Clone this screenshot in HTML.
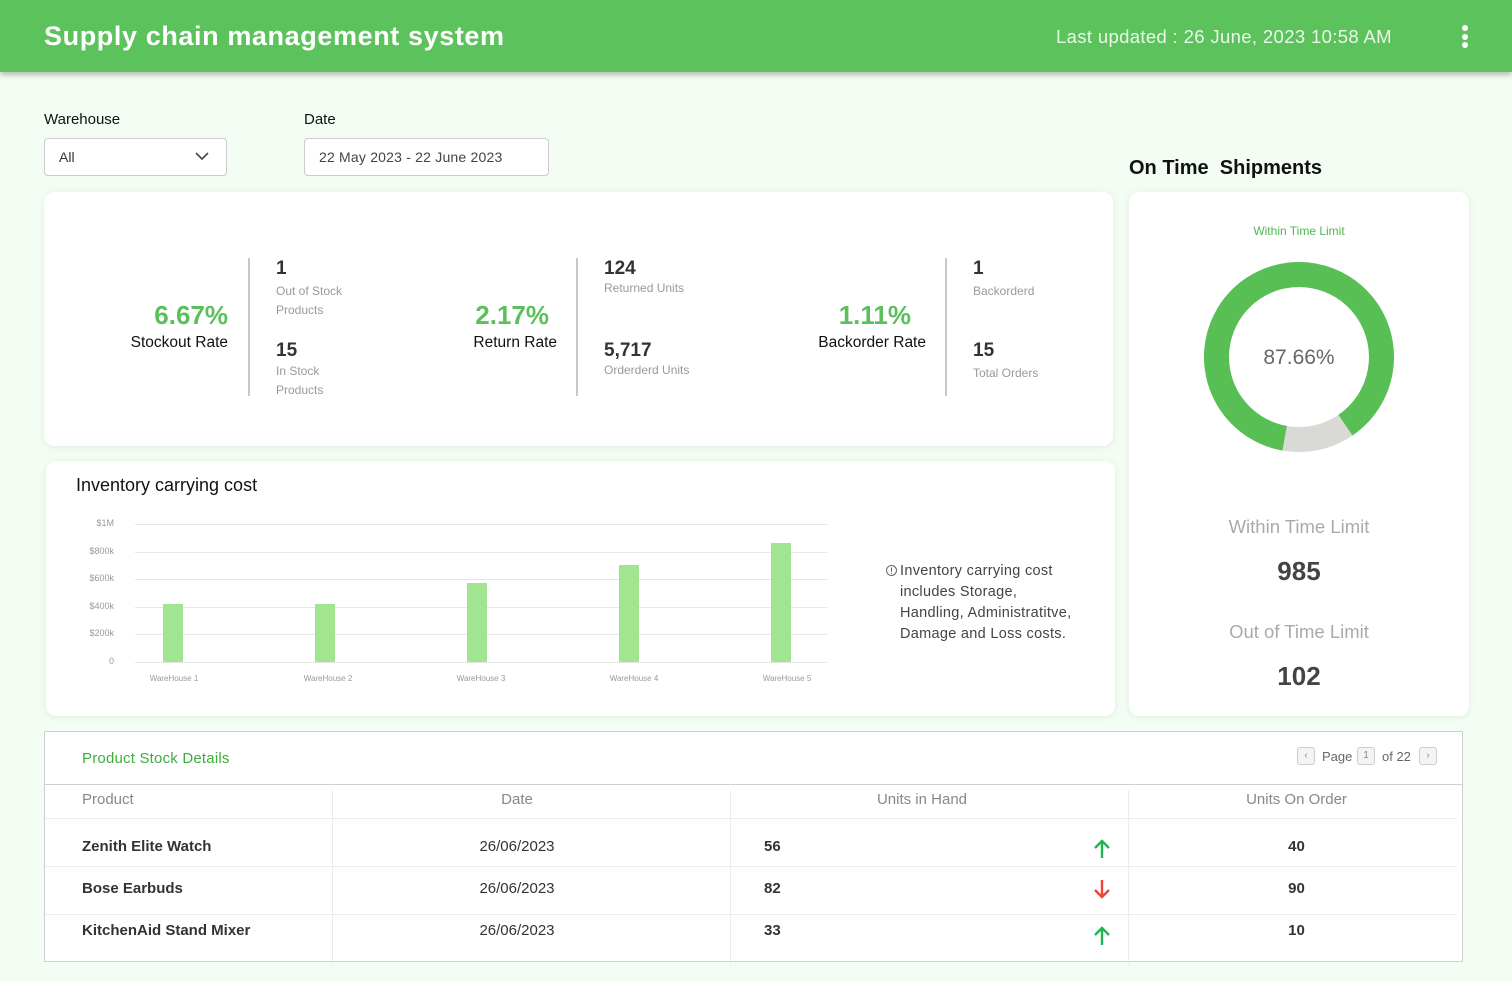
<!DOCTYPE html>
<html><head><meta charset="utf-8"><style>
*{box-sizing:border-box;margin:0;padding:0}
body{width:1512px;height:982px;overflow:hidden;background:#f3fdf3;font-family:"Liberation Sans",sans-serif;position:relative;color:#222}
.a{position:absolute;white-space:nowrap}
.hdr{position:absolute;left:0;top:0;width:1512px;height:72px;background:#5bc25c;box-shadow:0 3px 5px rgba(0,0,0,.25)}
.card{position:absolute;background:#fff;border-radius:10px;box-shadow:0 1px 6px rgba(120,170,120,.18)}
.big{font-weight:bold;font-size:19px;color:#333}
.sm{font-size:12px;color:#999;line-height:19px}
.pct{font-weight:bold;font-size:26px;color:#5bbf5b}
.lab{font-size:15.5px;color:#111}
.vl{position:absolute;width:2px;background:#c8c8c8;top:258px;height:138px}
.yl{position:absolute;font-size:9px;color:#999;text-align:right;width:40px}
.gl{position:absolute;left:135px;width:692px;height:1px;background:#e6e6e6}
.bar{position:absolute;width:20px;background:#a1e590}
.xl{position:absolute;font-size:8px;color:#999;width:80px;text-align:center}
.th{position:absolute;font-size:15px;color:#888}
.td{position:absolute;font-size:15px;color:#333;font-weight:bold}
.tdn{position:absolute;font-size:15px;color:#333}
.hl{position:absolute;height:1px;background:#ececec}
.vc{position:absolute;width:1px;background:#ececec;top:790px;height:176px}
.pb{position:absolute;width:18px;height:18px;border:1px solid #ccc;border-radius:3px;background:#f4f4f4;font-size:10px;color:#888;text-align:center;line-height:16px}
</style></head><body>
<div class="hdr"></div>
<div class="a" style="left:44px;top:21px;font-size:27px;font-weight:bold;color:#fff;letter-spacing:.6px">Supply chain management system</div>
<div class="a" style="left:1056px;top:26px;font-size:18.5px;color:#eaf8ea;letter-spacing:.35px">Last updated : 26 June, 2023 10:58 AM</div>
<div class="a" style="left:1462px;top:25px;width:6px;height:6px;border-radius:3px;background:#fff"></div>
<div class="a" style="left:1462px;top:34px;width:6px;height:6px;border-radius:3px;background:#fff"></div>
<div class="a" style="left:1462px;top:42px;width:6px;height:6px;border-radius:3px;background:#fff"></div>

<div class="a" style="left:44px;top:111px;font-size:15px;color:#111">Warehouse</div>
<div class="a" style="left:304px;top:111px;font-size:15px;color:#111">Date</div>
<div class="a" style="left:44px;top:138px;width:183px;height:38px;border:1px solid #ccc;border-radius:4px;background:#fff"></div>
<div class="a" style="left:59px;top:149px;font-size:14px;color:#333">All</div>
<svg class="a" style="left:194px;top:150px" width="16" height="12"><path d="M2 3l6 6 6-6" stroke="#444" stroke-width="1.6" fill="none"/></svg>
<div class="a" style="left:304px;top:138px;width:245px;height:38px;border:1px solid #ccc;border-radius:4px;background:#fff"></div>
<div class="a" style="left:319px;top:149px;font-size:14px;color:#444;letter-spacing:.2px">22 May 2023 - 22 June 2023</div>

<div class="card" style="left:44px;top:192px;width:1069px;height:254px"></div>
<div class="a pct" style="left:0;width:228px;text-align:right;top:300px">6.67%</div>
<div class="a lab" style="left:0;width:228px;text-align:right;top:334px">Stockout Rate</div>
<div class="vl" style="left:248px"></div>
<div class="a big" style="left:276px;top:258px">1</div>
<div class="a sm" style="left:276px;top:282px">Out of Stock<br>Products</div>
<div class="a big" style="left:276px;top:340px">15</div>
<div class="a sm" style="left:276px;top:362px">In Stock<br>Products</div>
<div class="a pct" style="left:300px;width:249px;text-align:right;top:300px">2.17%</div>
<div class="a lab" style="left:300px;width:257px;text-align:right;top:334px">Return Rate</div>
<div class="vl" style="left:576px"></div>
<div class="a big" style="left:604px;top:258px">124</div>
<div class="a sm" style="left:604px;top:279px">Returned Units</div>
<div class="a big" style="left:604px;top:340px">5,717</div>
<div class="a sm" style="left:604px;top:361px">Orderderd Units</div>
<div class="a pct" style="left:700px;width:211px;text-align:right;top:300px">1.11%</div>
<div class="a lab" style="left:700px;width:226px;text-align:right;top:334px">Backorder Rate</div>
<div class="vl" style="left:945px"></div>
<div class="a big" style="left:973px;top:258px">1</div>
<div class="a sm" style="left:973px;top:282px">Backorderd</div>
<div class="a big" style="left:973px;top:340px">15</div>
<div class="a sm" style="left:973px;top:364px">Total Orders</div>

<div class="card" style="left:46px;top:461px;width:1069px;height:255px"></div>
<div class="a" style="left:76px;top:475px;font-size:18px;color:#111">Inventory carrying cost</div>
<div class="yl" style="left:74px;top:518px">$1M</div>
<div class="yl" style="left:74px;top:546px">$800k</div>
<div class="yl" style="left:74px;top:573px">$600k</div>
<div class="yl" style="left:74px;top:601px">$400k</div>
<div class="yl" style="left:74px;top:628px">$200k</div>
<div class="yl" style="left:74px;top:656px">0</div>
<div class="gl" style="top:524px"></div><div class="gl" style="top:552px"></div><div class="gl" style="top:579px"></div><div class="gl" style="top:607px"></div><div class="gl" style="top:634px"></div><div class="gl" style="top:662px"></div>
<div class="bar" style="left:163px;top:604px;height:58px"></div>
<div class="bar" style="left:315px;top:604px;height:58px"></div>
<div class="bar" style="left:467px;top:583px;height:79px"></div>
<div class="bar" style="left:619px;top:565px;height:97px"></div>
<div class="bar" style="left:771px;top:543px;height:119px"></div>
<div class="xl" style="left:134px;top:674px">WareHouse 1</div>
<div class="xl" style="left:288px;top:674px">WareHouse 2</div>
<div class="xl" style="left:441px;top:674px">WareHouse 3</div>
<div class="xl" style="left:594px;top:674px">WareHouse 4</div>
<div class="xl" style="left:747px;top:674px">WareHouse 5</div>
<div class="a" style="left:886px;top:561px;font-size:14.5px;color:#444;line-height:21px"><span style="position:absolute;left:0;font-size:9px;border:1px solid #666;border-radius:50%;width:11px;height:11px;line-height:10px;text-align:center;top:4px">!</span><div style="padding-left:14px;letter-spacing:.3px">Inventory carrying cost<br>includes Storage,<br>Handling, Administratitve,<br>Damage and Loss costs.</div></div>

<div class="a" style="left:1129px;top:157px;font-size:20px;font-weight:bold;color:#111">On Time&nbsp; Shipments</div>
<div class="card" style="left:1129px;top:192px;width:340px;height:524px"></div>
<div class="a" style="left:1129px;width:340px;text-align:center;top:224px;font-size:12px;color:#4fb84f">Within Time Limit</div>
<svg class="a" style="left:1204px;top:262px" width="190" height="190" viewBox="0 0 190 190">
<circle cx="95" cy="95" r="82.5" fill="none" stroke="#d9d9d6" stroke-width="25"/>
<circle cx="95" cy="95" r="82.5" fill="none" stroke="#58bf55" stroke-width="25" stroke-dasharray="454.4 600" transform="rotate(100 95 95)"/>
</svg>
<div class="a" style="left:1129px;width:340px;text-align:center;top:346px;font-size:21px;color:#666">87.66%</div>
<div class="a" style="left:1129px;width:340px;text-align:center;top:516px;font-size:18.5px;color:#aaa">Within Time Limit</div>
<div class="a" style="left:1129px;width:340px;text-align:center;top:556px;font-size:26px;font-weight:bold;color:#444">985</div>
<div class="a" style="left:1129px;width:340px;text-align:center;top:621px;font-size:18.5px;color:#aaa">Out of Time Limit</div>
<div class="a" style="left:1129px;width:340px;text-align:center;top:661px;font-size:26px;font-weight:bold;color:#444">102</div>

<div class="a" style="left:44px;top:731px;width:1419px;height:231px;background:#fff;border:1px solid #cfcfcf"></div>
<div class="a" style="left:82px;top:750px;font-size:15px;color:#3cae3c;letter-spacing:.2px">Product Stock Details</div>
<div class="pb" style="left:1297px;top:747px">&lsaquo;</div>
<div class="a" style="left:1322px;top:749px;font-size:13px;color:#666">Page</div>
<div class="pb" style="left:1357px;top:747px">1</div>
<div class="a" style="left:1382px;top:749px;font-size:13px;color:#666">of 22</div>
<div class="pb" style="left:1419px;top:747px">&rsaquo;</div>
<div class="hl" style="left:45px;top:784px;width:1417px;background:#d0d0d0"></div>
<div class="vc" style="left:332px"></div><div class="vc" style="left:730px"></div><div class="vc" style="left:1128px"></div>
<div class="th" style="left:82px;top:791px">Product</div>
<div class="th" style="left:332px;width:370px;text-align:center;top:791px">Date</div>
<div class="th" style="left:730px;width:384px;text-align:center;top:791px">Units in Hand</div>
<div class="th" style="left:1128px;width:337px;text-align:center;top:791px">Units On Order</div>
<div class="hl" style="left:45px;top:818px;width:1412px"></div>
<div class="hl" style="left:45px;top:866px;width:1412px"></div>
<div class="hl" style="left:45px;top:914px;width:1412px"></div>
<div class="td" style="left:82px;top:838px">Zenith Elite Watch</div>
<div class="td" style="left:82px;top:880px">Bose Earbuds</div>
<div class="td" style="left:82px;top:922px">KitchenAid Stand Mixer</div>
<div class="tdn" style="left:332px;width:370px;text-align:center;top:838px">26/06/2023</div>
<div class="tdn" style="left:332px;width:370px;text-align:center;top:880px">26/06/2023</div>
<div class="tdn" style="left:332px;width:370px;text-align:center;top:922px">26/06/2023</div>
<div class="td" style="left:764px;top:838px">56</div>
<div class="td" style="left:764px;top:880px">82</div>
<div class="td" style="left:764px;top:922px">33</div>
<svg class="a" style="left:1092px;top:838px" width="20" height="22"><path d="M10 20V3M3 10l7-7 7 7" stroke="#1fb64f" stroke-width="2.4" fill="none"/></svg>
<svg class="a" style="left:1092px;top:878px" width="20" height="22"><path d="M10 2v17M3 12l7 7 7-7" stroke="#f0443a" stroke-width="2.4" fill="none"/></svg>
<svg class="a" style="left:1092px;top:925px" width="20" height="22"><path d="M10 20V3M3 10l7-7 7 7" stroke="#1fb64f" stroke-width="2.4" fill="none"/></svg>
<div class="td" style="left:1128px;width:337px;text-align:center;top:838px">40</div>
<div class="td" style="left:1128px;width:337px;text-align:center;top:880px">90</div>
<div class="td" style="left:1128px;width:337px;text-align:center;top:922px">10</div>
</body></html>
